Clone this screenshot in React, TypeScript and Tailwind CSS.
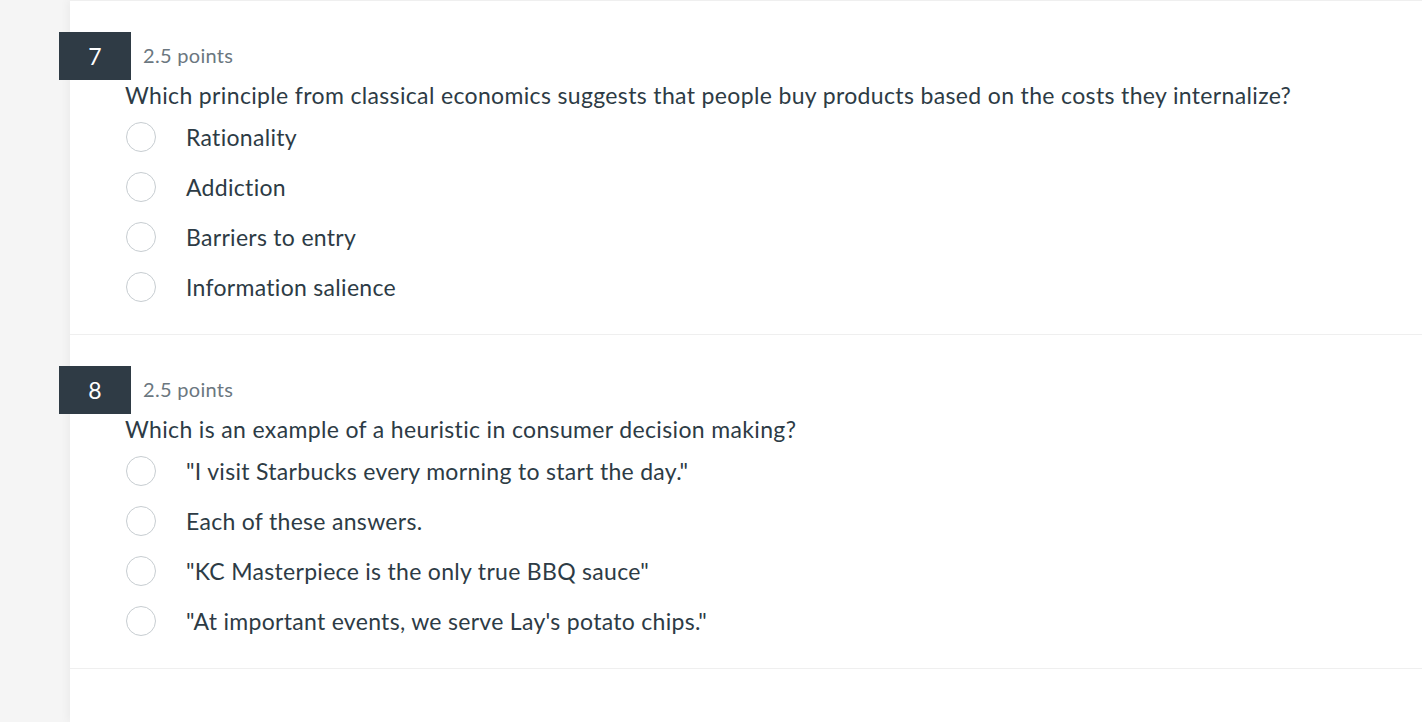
const questions = [
  {
    num: 7,
    points: "2.5 points",
    text: "Which principle from classical economics suggests that people buy products based on the costs they internalize?",
    options: ["Rationality", "Addiction", "Barriers to entry", "Information salience"],
  },
  {
    num: 8,
    points: "2.5 points",
    text: "Which is an example of a heuristic in consumer decision making?",
    options: [
      "\"I visit Starbucks every morning to start the day.\"",
      "Each of these answers.",
      "\"KC Masterpiece is the only true BBQ sauce\"",
      "\"At important events, we serve Lay's potato chips.\"",
    ],
  },
];

function Question({ q }: { q: (typeof questions)[number] }) {
  return (
    <div className="relative border-t border-[#efefef] pb-[22px]">
      <div className="mt-[30px] flex h-[48px] items-center pl-[73px]">
        <div className="absolute left-[-11px] top-[31px] flex h-[48px] w-[72px] items-center justify-center bg-[#2f3b45] text-[23px] text-white">
          {q.num}
        </div>
        <span className="text-[20px] tracking-[0.3px] text-[#6b7780]">{q.points}</span>
      </div>
      <div className="mt-[1px] pl-[55px] text-[23px] leading-[30px] tracking-[0.35px] text-[#2d3b45]">{q.text}</div>
      <div className="mt-[2px] flex flex-col pl-[56px]">
        {q.options.map((o) => (
          <label key={o} className="flex h-[50px] items-center gap-[30px]">
            <span className="h-[30px] w-[30px] shrink-0 rounded-full border border-[#c7cdd1] bg-white" />
            <span className="text-[23px] tracking-[0.3px] text-[#2d3b45]">{o}</span>
          </label>
        ))}
      </div>
    </div>
  );
}

export default function App() {
  return (
    <div className="flex h-[722px] overflow-hidden bg-[#f5f5f5] font-['Lato',sans-serif] [font-variant-ligatures:none]">
      <div className="w-[70px] shrink-0" />
      <main className="flex-1 bg-white shadow-[-3px_0_8px_rgba(0,0,0,0.04)]">
        {questions.map((q) => (
          <Question key={q.num} q={q} />
        ))}
        <div className="border-t border-[#efefef]" />
      </main>
    </div>
  );
}
